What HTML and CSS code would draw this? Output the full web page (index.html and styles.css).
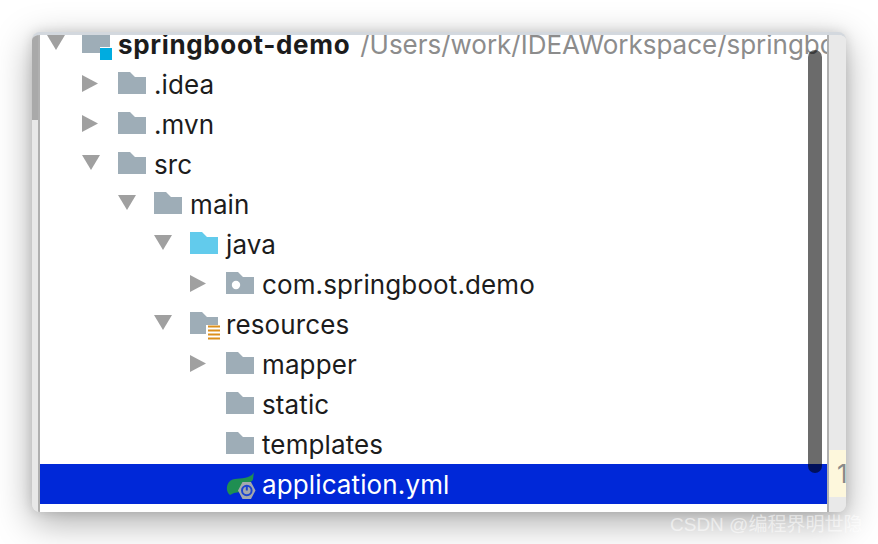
FILE: index.html
```html
<!DOCTYPE html>
<html lang="en">
<head>
<meta charset="utf-8">
<title>Project tree</title>
<link rel="stylesheet" href="styles.css">
</head>
<body>
<svg class="defs" width="0" height="0" aria-hidden="true">
  <defs>
    <symbol id="folder" viewBox="0 0 28 22"><path d="M0 0H12L17 5H28V22H0Z"/></symbol>
    <symbol id="right" viewBox="0 0 16 17" preserveAspectRatio="xMinYMid"><path d="M0 0L16 8.5L0 17Z"/></symbol>
    <symbol id="down" viewBox="0 0 18 15"><path d="M0 0H18L9 15Z"/></symbol>
  </defs>
</svg>
<main class="window">
  <div class="left-gutter"><div class="left-thumb"></div></div>
  <div class="tree-pane">
    <ul class="tree">
      <li class="row d0">
        <svg class="arrow dn"><use href="#down"/></svg>
        <svg class="icon module" viewBox="0 0 32 32"><path class="grey" d="M0 0H28V18H18V24H0Z"/><rect class="cyan" x="18" y="19" width="12" height="12"/></svg>
        <span class="name bold">springboot-demo</span><span class="name path">/Users/work/IDEAWorkspace/springboot-demo</span>
      </li>
      <li class="row d1"><svg class="arrow"><use href="#right"/></svg><svg class="icon"><use href="#folder"/></svg><span class="name">.idea</span></li>
      <li class="row d1"><svg class="arrow"><use href="#right"/></svg><svg class="icon"><use href="#folder"/></svg><span class="name">.mvn</span></li>
      <li class="row d1"><svg class="arrow dn"><use href="#down"/></svg><svg class="icon"><use href="#folder"/></svg><span class="name">src</span></li>
      <li class="row d2"><svg class="arrow dn"><use href="#down"/></svg><svg class="icon"><use href="#folder"/></svg><span class="name">main</span></li>
      <li class="row d3"><svg class="arrow dn"><use href="#down"/></svg><svg class="icon java"><use href="#folder"/></svg><span class="name">java</span></li>
      <li class="row d4"><svg class="arrow"><use href="#right"/></svg>
        <svg class="icon" viewBox="0 0 28 22"><path d="M0 0H12L17 5H28V22H0Z"/><circle class="hole" cx="10" cy="13" r="4.2"/></svg>
        <span class="name">com.springboot.demo</span></li>
      <li class="row d3"><svg class="arrow dn"><use href="#down"/></svg>
        <svg class="icon res" viewBox="0 0 32 29"><path d="M0 0H12L17 5H28V22H0Z"/><path class="hole-fill" d="M16 13H32V29H16Z"/><path class="bars" d="M18 14.5H30M18 18.500H30M18 22.500H30M18 26.500H30"/></svg>
        <span class="name">resources</span></li>
      <li class="row d4"><svg class="arrow"><use href="#right"/></svg><svg class="icon"><use href="#folder"/></svg><span class="name">mapper</span></li>
      <li class="row d4"><span class="arrow"></span><svg class="icon"><use href="#folder"/></svg><span class="name">static</span></li>
      <li class="row d4"><span class="arrow"></span><svg class="icon"><use href="#folder"/></svg><span class="name">templates</span></li>
      <li class="row d4 selected"><span class="arrow"></span>
        <svg class="icon yml" viewBox="0 0 30 28">
          <path class="leaf" d="M28 0C27 3 28 7 26 9L20 12L14 20L8 21L4 23C0 20 0 14 3 10C7 5 15 8 22 5C25 4 27 2 28 0Z"/>
          <path class="nut" d="M16.500 10H25L29.500 18.500L25 27H16.500L12 18.500Z"/>
          <circle class="dial" cx="20.800" cy="18.500" r="4.800"/>
          <path class="tick" d="M20.800 13.500V18.500"/>
        </svg>
        <span class="name">application.yml</span></li>
    </ul>
    <div class="thumb"></div>
  </div>
  <div class="right-gutter">
    <div class="marker"><span class="marker-text">1</span></div>
  </div>
</main>
<div class="watermark">CSDN @编程界明世隐</div>
</body>
</html>
```
FILE: styles.css
```css
* { box-sizing: border-box; }
html, body { margin: 0; height: 100%; }
body {
  background: #fff;
  padding: 32px;
  overflow: hidden;
  font-family: Inter, "Noto Sans CJK SC", sans-serif;
}
.defs { position: absolute; }
.window {
  width: 814px;
  height: 480px;
  display: flex;
  border-radius: 8px;
  overflow: hidden;
  background: #e9e9e9;
  border-top: 3px solid #d3d8de;
  box-shadow: 0 10px 36px rgba(0,0,0,.34), 0 0 12px rgba(0,0,0,.12);
}
.left-gutter {
  width: 8px;
  flex: none;
  background: #e8e8e8;
  border-right: 2px solid #b0b0b0;
}
.left-thumb { width: 6px; height: 85px; background: #a9a9a9; }
.tree-pane {
  position: relative;
  width: 787px;
  flex: none;
  background: #fff;
  overflow: hidden;
}
.tree { list-style: none; margin: -11px 0 0; padding: 0; }
.row {
  height: 40px;
  display: flex;
  align-items: center;
  white-space: nowrap;
  color: #1c1c1c;
  font-size: 26px;
}
.d0 { padding-left: 7px; }
.d1 { padding-left: 42px; }
.d2 { padding-left: 78px; }
.d3 { padding-left: 114px; }
.d4 { padding-left: 150px; }
.arrow { width: 18px; height: 17px; flex: none; margin-right: 18px; margin-top: -1px; fill: #a0a0a0; display: block; }
.dn { margin-top: -3px; }
.d0 .arrow { margin-right: 17px; }
.icon { width: 28px; height: 22px; flex: none; margin-right: 8px; margin-top: -2px; fill: #9eadb7; overflow: visible; }
.java { fill: #62cbec; }
.module { width: 32px; height: 32px; margin-right: 4px; margin-top: 2px; }
.grey { fill: #9eadb7; }
.cyan { fill: #00ace0; }
.hole { fill: #fff; }
.res { width: 32px; height: 29px; margin-right: 4px; margin-top: 5px; }
.hole-fill { fill: #fff; }
.bars { stroke: #dc8f1c; stroke-width: 2; fill: none; }
.yml { width: 30px; height: 28px; margin-right: 6px; margin-top: 3px; }
.leaf { fill: #1f8f52; }
.nut { fill: #a4a8ae; }
.dial { fill: none; stroke: #1d44d0; stroke-width: 2; }
.tick { stroke: #1d44d0; stroke-width: 2; }
.name { letter-spacing: .12px; margin-top: 1px; }
.bold { font-weight: 700; letter-spacing: .65px; }
.path { color: #8c8c8c; margin-left: 10px; letter-spacing: -.02px; }
.selected { background: #0028d8; color: #fff; }
.thumb {
  position: absolute;
  left: 768px;
  top: 15px;
  width: 14px;
  height: 423px;
  border-radius: 7px;
  background: rgba(0,0,0,.58);
}
.right-gutter {
  width: 19px;
  flex: none;
  border-left: 2px solid #b0b0b0;
  background: #e9e9e9;
  padding-top: 415px;
}
.marker {
  height: 47px;
  background: #fdf7dc;
  color: #8a8a8a;
  font-size: 26px;
  padding-left: 8px;
  line-height: 47px;
  overflow: hidden;
}
.watermark {
  position: absolute;
  left: 670px;
  top: 513px;
  color: rgba(255,255,255,.55);
  font-size: 19px;
  line-height: 24px;
  font-family: "Liberation Sans", "Noto Sans CJK SC", sans-serif;
  white-space: nowrap;
}
```
